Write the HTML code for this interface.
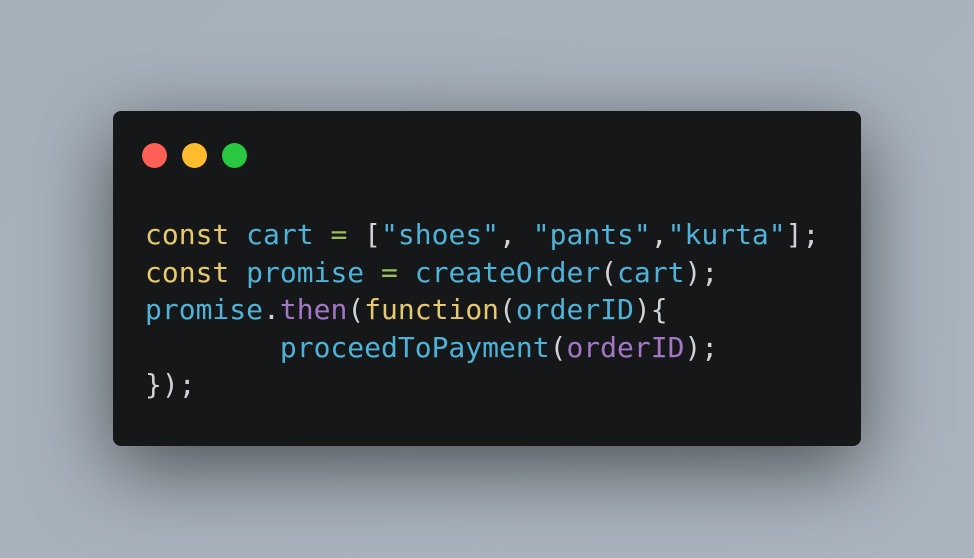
<!DOCTYPE html>
<html><head><style>
html,body{margin:0;padding:0;}
body{width:974px;height:558px;background:linear-gradient(135deg,#a6b0ba,#aab4be);position:relative;overflow:hidden;}
.card{position:absolute;left:113px;top:111px;width:748px;height:335px;background:#161718;border-radius:8px;box-shadow:0 22px 80px rgba(0,0,0,0.55);}
.dot{position:absolute;top:143px;width:25px;height:25px;border-radius:50%;}
pre{position:absolute;left:145px;top:216px;margin:0;font-family:"DejaVu Sans Mono","Liberation Mono",monospace;font-size:28px;line-height:37.5px;color:#cfd2d6;}
.k{color:#e6c86e}.v{color:#4fb2d8}.o{color:#99c15c}.p{color:#a476c6}
</style></head><body>
<div class="card"></div>
<div class="dot" style="left:142px;background:#fe5f57"></div>
<div class="dot" style="left:182px;background:#febc2e"></div>
<div class="dot" style="left:222px;background:#28c840"></div>
<pre><span class="k">const</span> <span class="v">cart</span> <span class="o">=</span> [<span class="v">"shoes"</span>, <span class="v">"pants"</span>,<span class="v">"kurta"</span>];
<span class="k">const</span> <span class="v">promise</span> <span class="o">=</span> <span class="v">createOrder</span>(<span class="v">cart</span>);
<span class="v">promise</span>.<span class="p">then</span>(<span class="k">function</span>(<span class="v">orderID</span>){
        <span class="v">proceedToPayment</span>(<span class="p">orderID</span>);
});</pre>
</body></html>
